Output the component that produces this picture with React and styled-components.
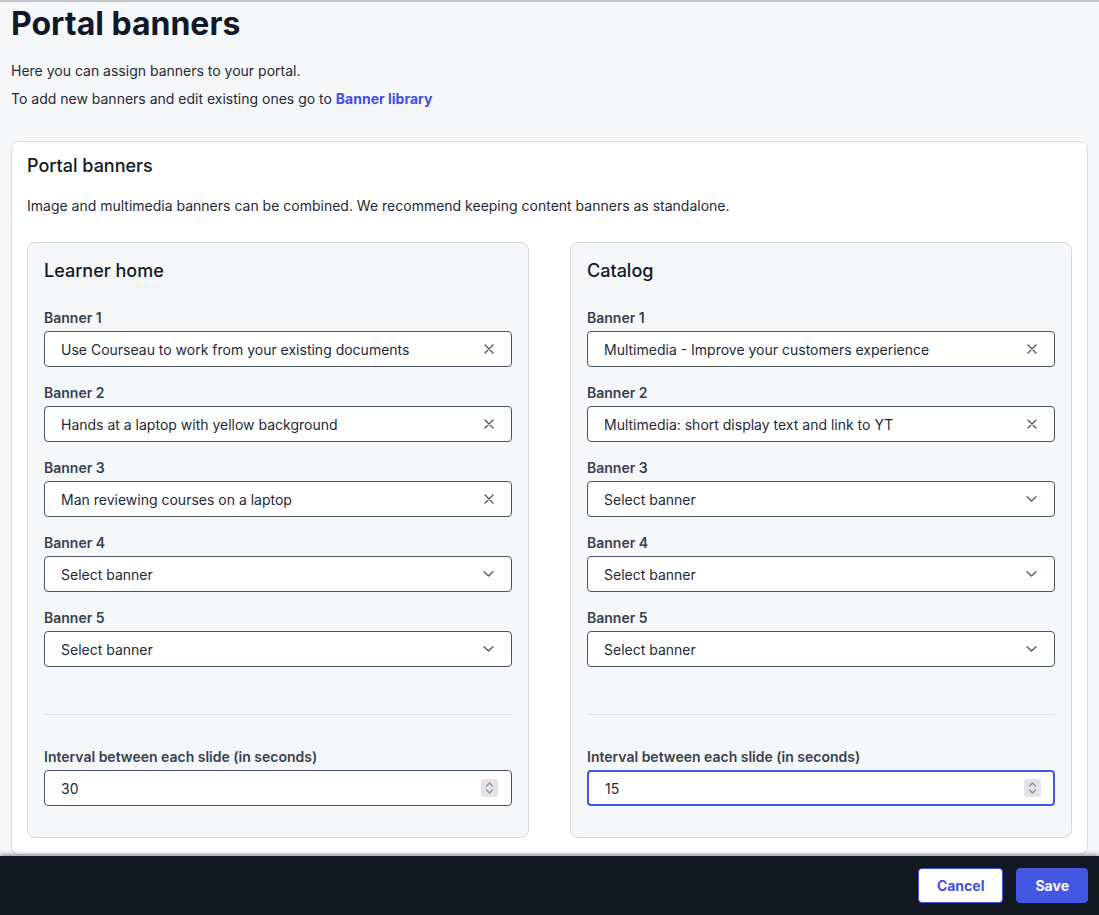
import React from "react";
import styled, { createGlobalStyle } from "styled-components";

const Global = createGlobalStyle`
  * { box-sizing: border-box; }
  html, body { margin: 0; padding: 0; height: 100%; }
  body {
    font-family: Inter, "Noto Sans", "Liberation Sans", sans-serif;
    background: #f6f7f9;
    color: #1f2937;
    -webkit-font-smoothing: antialiased;
  }
  #root { height: 100%; }
`;

const Shell = styled.div`
  height: 100vh;
  display: flex;
  flex-direction: column;
  overflow: hidden;
`;

const Main = styled.main`
  flex: 1;
  min-height: 0;
  overflow: hidden;
  border-top: 2px solid #c3c5c9;
  padding: 2px 11px 0 11px;
`;

const Title = styled.h1`
  margin: 0;
  font-size: 32px;
  line-height: 40px;
  font-weight: 700;
  color: #111827;
`;

const Intro = styled.p`
  margin: ${(p) => (p.$first ? "17px" : "8px")} 0 0 0;
  font-size: 14px;
  line-height: 20px;
  color: #1f2937;
`;

const Link = styled.a`
  color: #3f51e3;
  font-weight: 700;
  text-decoration: none;
`;

const Card = styled.section`
  margin-top: 32px;
  background: #ffffff;
  border: 1px solid #d9dce1;
  border-radius: 8px;
  padding: 10px 15px 16px 15px;
`;

const CardTitle = styled.h2`
  margin: 0;
  font-size: 18px;
  line-height: 28px;
  font-weight: 500;
  color: #111827;
`;

const CardText = styled.p`
  margin: 16px 0 0 0;
  font-size: 14px;
  line-height: 20px;
  color: #1f2937;
`;

const Columns = styled.div`
  margin-top: 26px;
  display: grid;
  grid-template-columns: 1fr 1fr;
  gap: 41px;
`;

const Panel = styled.div`
  background: #f6f7f9;
  border: 1px solid #d4d7dc;
  border-radius: 8px;
  padding: 14px 16px 31px 16px;
`;

const PanelTitle = styled.h3`
  margin: 0;
  font-size: 18px;
  line-height: 28px;
  font-weight: 500;
  color: #111827;
`;

const FieldList = styled.div`
  margin-top: 22px;
  display: flex;
  flex-direction: column;
  gap: 15px;
`;

const FieldGroup = styled.div`
  display: flex;
  flex-direction: column;
  gap: 3px;
`;

const Label = styled.label`
  padding-top: 1px;
  font-size: 14px;
  line-height: 20px;
  font-weight: 600;
  color: #374151;
`;

const Control = styled.div`
  height: 36px;
  display: flex;
  align-items: center;
  justify-content: space-between;
  background: #ffffff;
  border: ${(p) => (p.$focused ? "2px solid #4355e6" : "1px solid #4b5563")};
  border-radius: 4px;
  padding: 0 ${(p) => (p.$focused ? "12px" : "17px")} 0 16px;
  font-size: 14px;
  color: #1f2937;
`;

const Value = styled.span`
  white-space: nowrap;
  overflow: hidden;
  text-overflow: ellipsis;
`;

const IconSlot = styled.span`
  display: flex;
  align-items: center;
  justify-content: center;
  color: #4b5563;
`;

const Divider = styled.hr`
  margin: 47px 0 0 0;
  border: 0;
  border-top: 1px solid #e2e4e8;
`;

const IntervalGroup = styled(FieldGroup)`
  margin-top: 31px;
`;

const Spinner = styled.span`
  width: 17px;
  height: 18px;
  background: #e4e4e8;
  border-radius: 2px;
  display: flex;
  align-items: center;
  justify-content: center;
  margin-right: ${(p) => (p.$focused ? "0" : "-4px")};
`;

const Footer = styled.footer`
  flex: 0 0 59px;
  background: #111821;
  box-shadow: 0 -2px 4px rgba(0, 0, 0, 0.35);
  position: relative;
  display: flex;
  align-items: center;
  justify-content: flex-end;
  gap: 13px;
  padding: 0 11px;
`;

const Button = styled.button`
  height: 35px;
  padding: 0 18px;
  border-radius: 4px;
  font-family: inherit;
  font-size: 14px;
  font-weight: 700;
  cursor: pointer;
  border: 1px solid #4457e3;
  background: ${(p) => (p.$primary ? "#4457e3" : "#ffffff")};
  color: ${(p) => (p.$primary ? "#ffffff" : "#3f51e3")};
`;

const CloseIcon = () => (
  <svg width="10" height="10" viewBox="0 0 10 10" fill="none">
    <path d="M1 1L9 9M9 1L1 9" stroke="currentColor" strokeWidth="1.25" strokeLinecap="round" />
  </svg>
);

const ChevronIcon = () => (
  <svg width="11" height="6" viewBox="0 0 11 6" fill="none">
    <path d="M1 0.75L5.5 5L10 0.75" stroke="currentColor" strokeWidth="1.25" strokeLinecap="round" strokeLinejoin="round" />
  </svg>
);

const SpinIcon = () => (
  <svg width="9" height="14" viewBox="0 0 9 14" fill="none">
    <path d="M1.5 5L4.5 2L7.5 5M1.5 9L4.5 12L7.5 9" stroke="#8b8b94" strokeWidth="1.2" strokeLinecap="round" strokeLinejoin="round" />
  </svg>
);

const BannerField = ({ label, value }) => (
  <FieldGroup>
    <Label>{label}</Label>
    <Control>
      <Value>{value || "Select banner"}</Value>
      <IconSlot>{value ? <CloseIcon /> : <ChevronIcon />}</IconSlot>
    </Control>
  </FieldGroup>
);

const BannerPanel = ({ title, banners, interval, focused }) => (
  <Panel>
    <PanelTitle>{title}</PanelTitle>
    <FieldList>
      {banners.map((b, i) => (
        <BannerField key={i} label={`Banner ${i + 1}`} value={b} />
      ))}
    </FieldList>
    <Divider />
    <IntervalGroup>
      <Label>Interval between each slide (in seconds)</Label>
      <Control $focused={focused}>
        <Value>{interval}</Value>
        <Spinner $focused={focused}>
          <SpinIcon />
        </Spinner>
      </Control>
    </IntervalGroup>
  </Panel>
);

export default function App() {
  return (
    <Shell>
      <Global />
      <Main>
        <Title>Portal banners</Title>
        <Intro $first>Here you can assign banners to your portal.</Intro>
        <Intro>
          To add new banners and edit existing ones go to <Link href="#">Banner library</Link>
        </Intro>
        <Card>
          <CardTitle>Portal banners</CardTitle>
          <CardText>
            Image and multimedia banners can be combined. We recommend keeping content banners as standalone.
          </CardText>
          <Columns>
            <BannerPanel
              title="Learner home"
              banners={[
                "Use Courseau to work from your existing documents",
                "Hands at a laptop with yellow background",
                "Man reviewing courses on a laptop",
                "",
                "",
              ]}
              interval="30"
            />
            <BannerPanel
              title="Catalog"
              banners={[
                "Multimedia - Improve your customers experience",
                "Multimedia: short display text and link to YT",
                "",
                "",
                "",
              ]}
              interval="15"
              focused
            />
          </Columns>
        </Card>
      </Main>
      <Footer>
        <Button>Cancel</Button>
        <Button $primary>Save</Button>
      </Footer>
    </Shell>
  );
}
